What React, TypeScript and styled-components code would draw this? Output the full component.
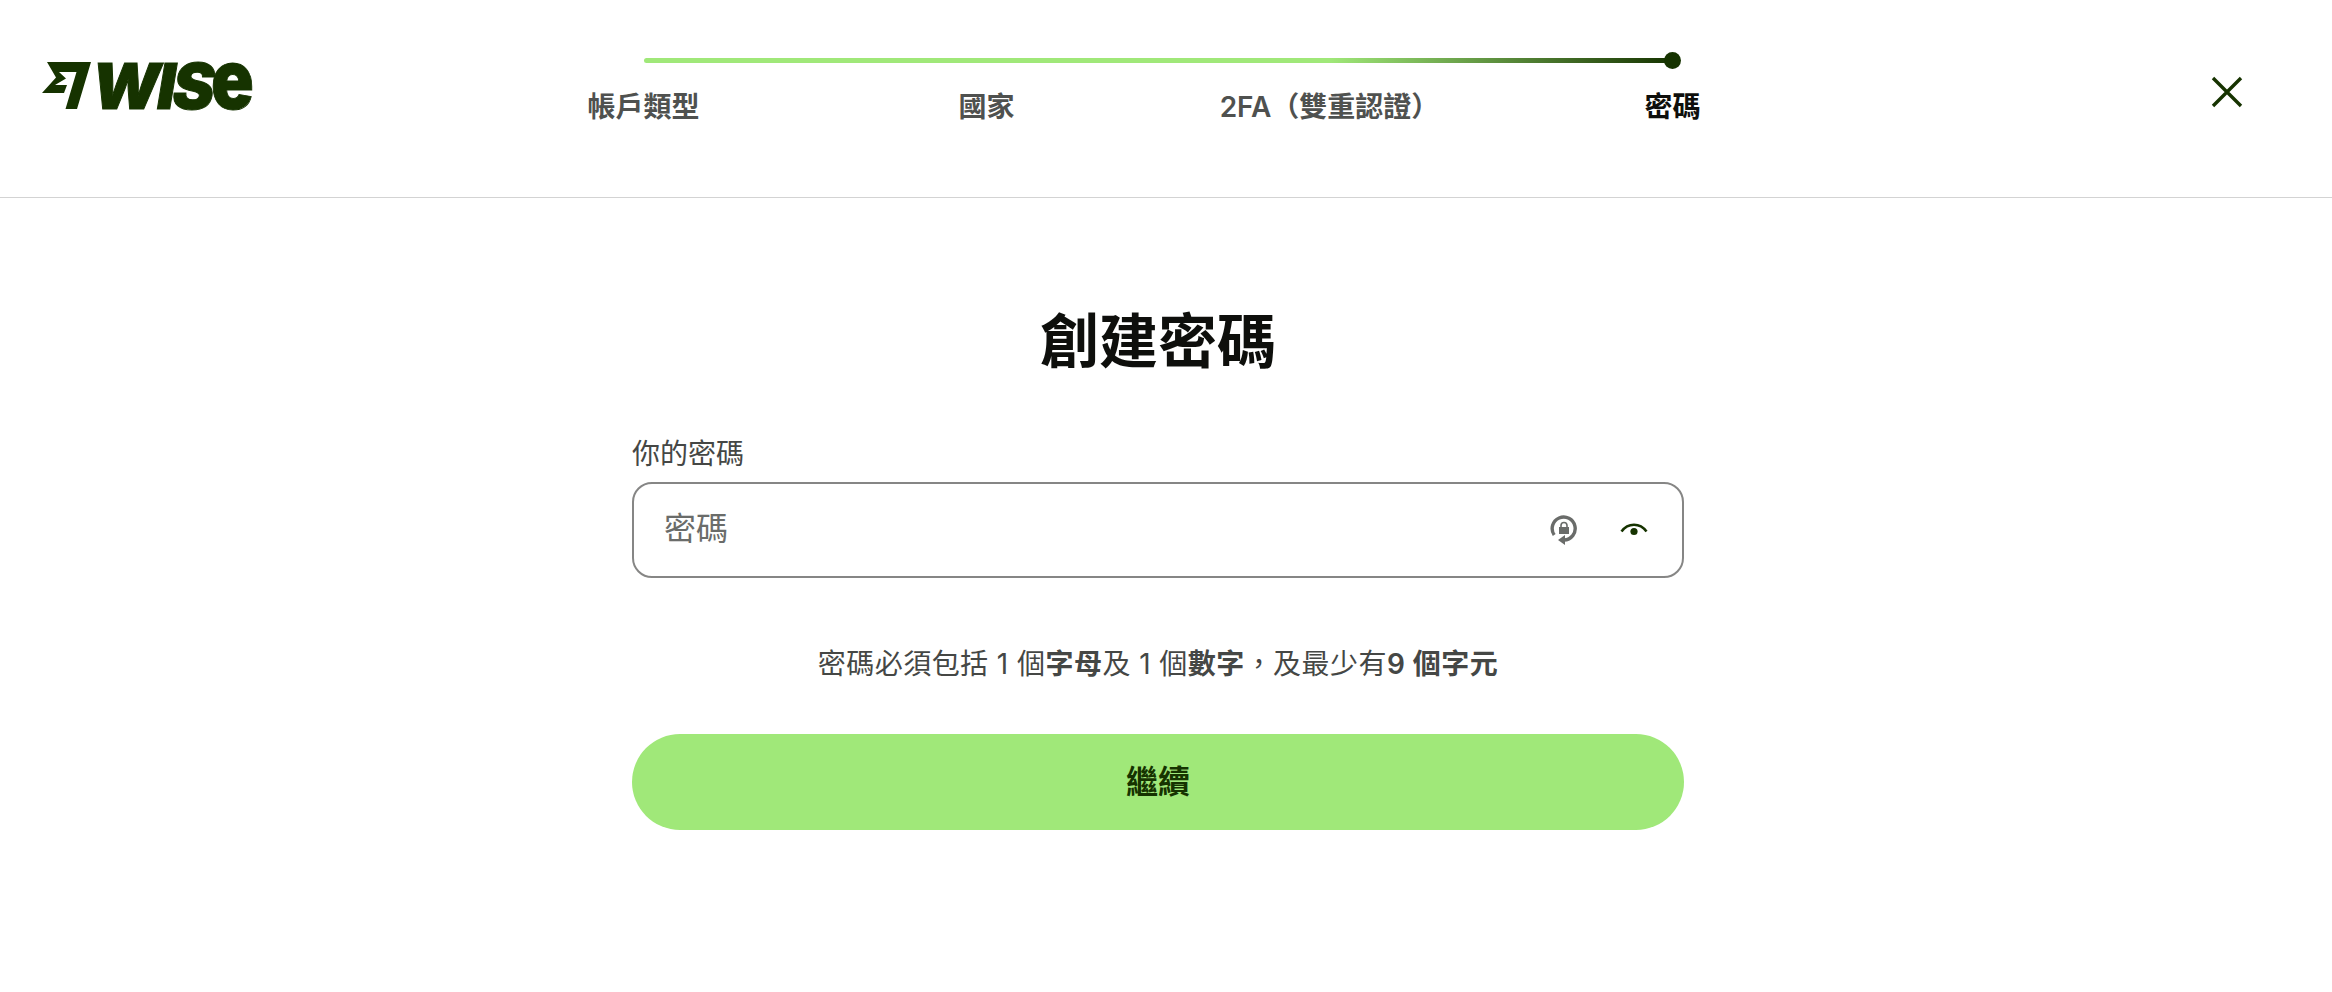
import React from 'react';
import styled, { createGlobalStyle } from 'styled-components';

const CJK = `Inter, "Noto Sans CJK TC", "Noto Sans CJK SC", sans-serif`;

const GlobalStyle = createGlobalStyle`
  html, body {
    margin: 0;
    padding: 0;
    background: #fff;
    font-family: ${CJK};
  }
`;

const STEPS = ['帳戶類型', '國家', '2FA（雙重認證）', '密碼'];

const Page = styled.div`
  width: 2316px;
  min-height: 992px;
`;

const Header = styled.header`
  height: 198px;
  display: grid;
  grid-template-columns: 1fr 1372px 1fr;
  border-bottom: 1px solid #d3d3d3;
  width: 2332px;
  padding-right: 16px;
  box-sizing: border-box;
`;

const Brand = styled.div`
  display: flex;
  align-items: flex-start;
  gap: 0;
  padding: 62px 0 0 42px;
`;

const Wordmark = styled.span`
  margin-top: -7px;
  font-family: Inter, sans-serif;
  font-size: 63px;
  font-weight: 900;
  font-style: italic;
  line-height: 48px;
  letter-spacing: -3px;
  color: #163300;
  -webkit-text-stroke: 1px #163300;
  white-space: nowrap;
`;

const WordmarkTail = styled.span`
  display: inline-block;
  font-size: 84px;
  font-style: normal;
  transform: scaleX(0.84);
  transform-origin: left center;
`;

const Stepper = styled.div`
  display: flex;
  flex-direction: column;
  padding-top: 50px;
`;

const Track = styled.div`
  position: relative;
  height: 5px;
  margin: 8px 171.5px 0;
  border-radius: 3px;
  background: linear-gradient(90deg, #a0e879 0%, #a0e879 66.6%, #163300 100%);
`;

const Dot = styled.span`
  position: absolute;
  right: -8px;
  top: -6px;
  width: 17px;
  height: 17px;
  border-radius: 50%;
  background: #163300;
`;

const StepRow = styled.div`
  display: grid;
  grid-template-columns: repeat(4, 343px);
  margin-top: 26px;
`;

const StepLabel = styled.span<{ $active?: boolean }>`
  text-align: center;
  font-size: 28px;
  line-height: 36px;
  font-weight: ${p => (p.$active ? 700 : 600)};
  color: ${p => (p.$active ? '#0e0f0c' : '#4f514f')};
`;

const CloseCell = styled.div`
  display: flex;
  justify-content: flex-end;
  padding: 73px 70px 0 0;
  align-items: flex-start;
`;

const CloseButton = styled.button`
  width: 38px;
  height: 38px;
  padding: 0;
  border: 0;
  background: none;
  color: #163300;
  display: flex;
`;

const Main = styled.main`
  width: 1052px;
  margin: 0 auto;
  padding-top: 106px;
  display: flex;
  flex-direction: column;
`;

const Title = styled.h1`
  margin: 0;
  text-align: center;
  font-size: 59px;
  line-height: 76px;
  font-weight: 700;
  color: #0e0f0c;
`;

const FieldLabel = styled.label`
  margin-top: 54px;
  font-size: 28px;
  line-height: 40px;
  font-weight: 400;
  color: #454745;
`;

const InputBox = styled.div`
  margin-top: 8px;
  height: 96px;
  box-sizing: border-box;
  border: 2px solid #868685;
  border-radius: 20px;
  padding: 0 34px 0 30px;
  display: flex;
  align-items: center;
  gap: 42px;
`;

const PlaceholderText = styled.span`
  flex: 1;
  padding-bottom: 8px;
  font-size: 32px;
  color: #6a6c6a;
`;

const IconSlot = styled.span`
  display: flex;
  color: #6a6c6a;
`;

const EyeSlot = styled(IconSlot)`
  color: #163300;
`;

const Hint = styled.p`
  margin: 65px 0 0;
  text-align: center;
  font-size: 28px;
  line-height: 42px;
  font-weight: 400;
  letter-spacing: 0.45px;
  color: #454745;

  strong {
    font-weight: 600;
  }
`;

const Submit = styled.button`
  margin-top: 49px;
  height: 96px;
  padding: 0 0 7px;
  border: 0;
  border-radius: 48px;
  background: #a0e879;
  color: #163300;
  font-family: ${CJK};
  font-size: 32px;
  font-weight: 600;
`;

const FlagMark = () => (
  <svg width="50" height="48" viewBox="0 0 50 48" fill="#163300" style={{ flexShrink: 0 }}>
    <path d="M5 0H49L35 47H23.5L34.5 10H17L24 16.5L13 23H25L22 31H0L14 15.5Z" />
  </svg>
);

const CloseIcon = () => (
  <svg width="38" height="38" viewBox="0 0 38 38" fill="none" stroke="currentColor" strokeWidth="3.4">
    <path d="M5 5L33 33M33 5L5 33" />
  </svg>
);

const LockCycleIcon = () => (
  <svg width="28" height="30" viewBox="0 0 28 30" fill="none">
    <path d="M4.2 20A11.5 11.5 0 1 1 14 25" stroke="currentColor" strokeWidth="3.4" />
    <path d="M8 25L15 20V30Z" fill="currentColor" />
    <path d="M9 12H19V19H9Z" fill="currentColor" />
    <path d="M11 12V10.5A3 3 0 0 1 17 10.5V12" stroke="currentColor" strokeWidth="1.6" />
  </svg>
);

const EyeIcon = () => (
  <svg width="28" height="16" viewBox="0 0 28 16" fill="none">
    <path d="M1.5 9.5C8 0.5 20 0.5 26.5 9.5" stroke="currentColor" strokeWidth="2.6" />
    <circle cx="14" cy="9.5" r="3.6" fill="currentColor" />
  </svg>
);

export default function App() {
  return (
    <>
      <GlobalStyle />
      <Page>
        <Header>
          <Brand>
            <FlagMark />
            <Wordmark>
              WIS<WordmarkTail>e</WordmarkTail>
            </Wordmark>
          </Brand>
          <Stepper>
            <Track>
              <Dot />
            </Track>
            <StepRow>
              {STEPS.map((step, i) => (
                <StepLabel key={step} $active={i === STEPS.length - 1}>
                  {step}
                </StepLabel>
              ))}
            </StepRow>
          </Stepper>
          <CloseCell>
            <CloseButton aria-label="關閉">
              <CloseIcon />
            </CloseButton>
          </CloseCell>
        </Header>
        <Main>
          <Title>創建密碼</Title>
          <FieldLabel>你的密碼</FieldLabel>
          <InputBox>
            <PlaceholderText>密碼</PlaceholderText>
            <IconSlot>
              <LockCycleIcon />
            </IconSlot>
            <EyeSlot>
              <EyeIcon />
            </EyeSlot>
          </InputBox>
          <Hint>
            密碼必須包括 1 個<strong>字母</strong>及 1 個<strong>數字</strong>，及最少有<strong>9 個字元</strong>
          </Hint>
          <Submit>繼續</Submit>
        </Main>
      </Page>
    </>
  );
}
